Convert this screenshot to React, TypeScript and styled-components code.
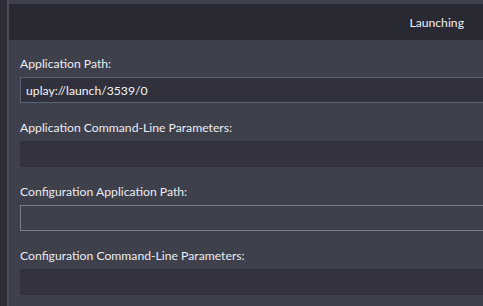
import React from "react";
import styled, { createGlobalStyle } from "styled-components";

const Global = createGlobalStyle`
  html, body { margin: 0; padding: 0; background: #3e404c; overflow: hidden; }
  body { font-family: Lato, "Noto Sans", sans-serif; }
`;

const Frame = styled.div`
  display: flex;
  width: 483px;
  height: 306px;
  overflow: hidden;
  background: #3e404c;
`;

const SideStrip = styled.div`
  width: 7px;
  flex: none;
  background: #2b2c36;
  border-right: 2px solid #4a4c5a;
`;

const Main = styled.div`
  flex: 1;
  display: flex;
  flex-direction: column;
  padding-top: 4px;
  min-width: 0;
`;

const Header = styled.div`
  height: 36px;
  background: #282933;
  display: flex;
  align-items: center;
  justify-content: flex-end;
  padding-right: 19px;
  color: #f0f0f4;
  font-size: 12.2px;
`;

const Content = styled.div`
  display: flex;
  flex-direction: column;
  gap: 17px;
  padding: 16px 0 0 11px;
`;

const Field = styled.div`
  display: flex;
  flex-direction: column;
  gap: 5px;
`;

const Label = styled.div`
  color: #ececf2;
  font-size: 12.2px;
  line-height: 16px;
  height: 16px;
`;

type Variant = "focused" | "dark" | "outlined";

const Input = styled.div<{ $variant: Variant }>`
  box-sizing: border-box;
  width: 480px;
  height: 26px;
  display: flex;
  align-items: center;
  padding-left: 5px;
  color: #f4f4f8;
  font-size: 12.2px;
  background: ${(p) => (p.$variant === "outlined" ? "#3e404c" : p.$variant === "focused" ? "#30313c" : "#33343f")};
  border: 1px solid
    ${(p) => (p.$variant === "focused" ? "#5a6378" : p.$variant === "outlined" ? "#7a7d8b" : "#2f303a")};
`;

const fields: { label: string; value: string; variant: Variant }[] = [
  { label: "Application Path:", value: "uplay://launch/3539/0", variant: "focused" },
  { label: "Application Command-Line Parameters:", value: "", variant: "dark" },
  { label: "Configuration Application Path:", value: "", variant: "outlined" },
  { label: "Configuration Command-Line Parameters:", value: "", variant: "dark" },
];

export default function App() {
  return (
    <Frame>
      <Global />
      <SideStrip />
      <Main>
        <Header>Launching</Header>
        <Content>
          {fields.map((f) => (
            <Field key={f.label}>
              <Label>{f.label}</Label>
              <Input $variant={f.variant}>{f.value}</Input>
            </Field>
          ))}
        </Content>
      </Main>
    </Frame>
  );
}
